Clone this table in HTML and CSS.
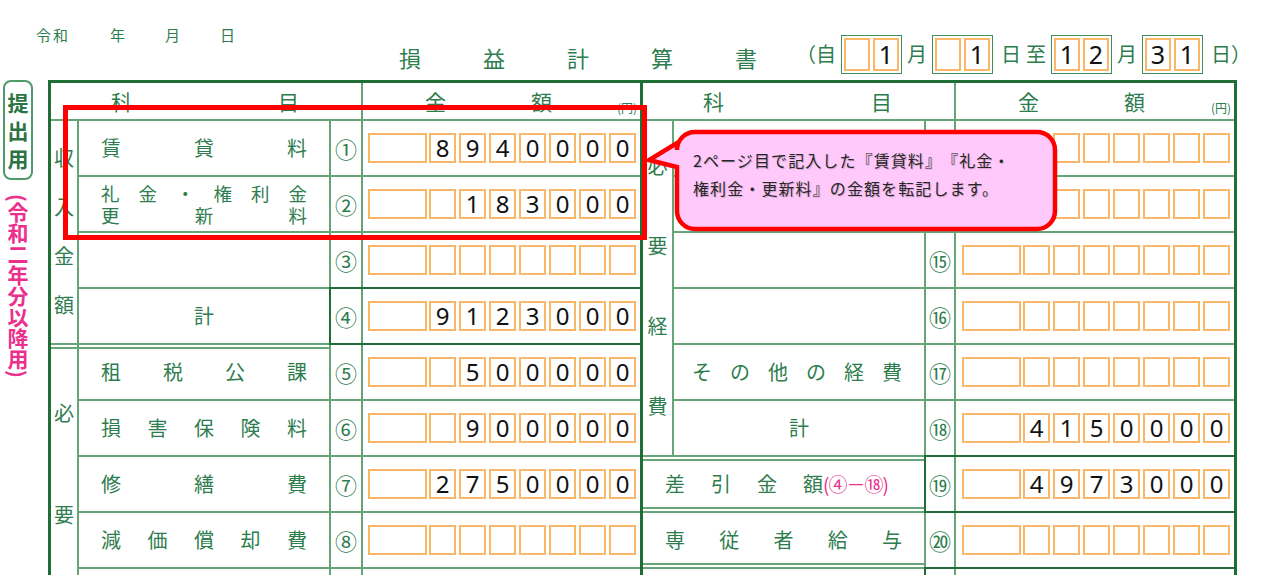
FILE: index.html
```html
<!DOCTYPE html>
<html lang="ja">
<head>
<meta charset="utf-8">
<title>損益計算書</title>
<link rel="stylesheet" href="styles.css">
</head>
<body>
<div class="page">
  <header class="top">
    <div class="era"><span class="reiwa">令和</span><span>年</span><span>月</span><span>日</span></div>
    <div class="title">
      <h1 class="title-text"><span>損</span><span>益</span><span>計</span><span>算</span><span>書</span></h1>
      <div class="period">
        <span class="pc">（自</span>
        <span class="pair"><i class="d dd"></i><i class="d dd">1</i></span>
        <span class="pc">月</span>
        <span class="pair"><i class="d dd"></i><i class="d dd">1</i></span>
        <span class="pc sp">日</span>
        <span class="pc">至</span>
        <span class="pair"><i class="d dd">1</i><i class="d dd">2</i></span>
        <span class="pc">月</span>
        <span class="pair"><i class="d dd">3</i><i class="d dd">1</i></span>
        <span class="pc sp">日）</span>
      </div>
    </div>
  </header>

  <div class="main">
    <aside class="side">
      <div class="tab"><span>提</span><span>出</span><span>用</span></div>
      <div class="note">(令和二年分以降用)</div>
    </aside>

    <div class="sheet">
      <!-- LEFT HALF -->
      <div class="half left">
        <div class="cell hd hd-name"><span>科</span><span>目</span></div>
        <div class="cell hd hd-amt"><span class="k1">金</span><span class="k2">額</span><small>(円)</small></div>

        <div class="cell vlabel v-income"><span>収</span><span>入</span><span>金</span><span>額</span></div>
        <div class="cell name"><span>賃</span><span>貸</span><span>料</span></div>
        <div class="cell num">①</div>
        <div class="cell amt"><i class="d w"></i><i class="d">8</i><i class="d">9</i><i class="d">4</i><i class="d">0</i><i class="d">0</i><i class="d">0</i><i class="d">0</i></div>

        <div class="cell name two"><div class="line"><span>礼</span><span>金</span><span>・</span><span>権</span><span>利</span><span>金</span></div><div class="line"><span>更</span><span>新</span><span>料</span></div></div>
        <div class="cell num">②</div>
        <div class="cell amt"><i class="d w"></i><i class="d"></i><i class="d">1</i><i class="d">8</i><i class="d">3</i><i class="d">0</i><i class="d">0</i><i class="d">0</i></div>

        <div class="cell name"></div>
        <div class="cell num">③</div>
        <div class="cell amt"><i class="d w"></i><i class="d"></i><i class="d"></i><i class="d"></i><i class="d"></i><i class="d"></i><i class="d"></i><i class="d"></i></div>

        <div class="cell name center"><span>計</span></div>
        <div class="total total-l">
          <div class="cell num">④</div>
          <div class="cell amt"><i class="d w"></i><i class="d">9</i><i class="d">1</i><i class="d">2</i><i class="d">3</i><i class="d">0</i><i class="d">0</i><i class="d">0</i></div>
        </div>

        <div class="cell vlabel v-exp dbl-top"><span>必</span><span>要</span></div>
        <div class="cell name dbl-top"><span>租</span><span>税</span><span>公</span><span>課</span></div>
        <div class="cell num">⑤</div>
        <div class="cell amt"><i class="d w"></i><i class="d"></i><i class="d">5</i><i class="d">0</i><i class="d">0</i><i class="d">0</i><i class="d">0</i><i class="d">0</i></div>

        <div class="cell name"><span>損</span><span>害</span><span>保</span><span>険</span><span>料</span></div>
        <div class="cell num">⑥</div>
        <div class="cell amt"><i class="d w"></i><i class="d"></i><i class="d">9</i><i class="d">0</i><i class="d">0</i><i class="d">0</i><i class="d">0</i><i class="d">0</i></div>

        <div class="cell name"><span>修</span><span>繕</span><span>費</span></div>
        <div class="cell num">⑦</div>
        <div class="cell amt"><i class="d w"></i><i class="d">2</i><i class="d">7</i><i class="d">5</i><i class="d">0</i><i class="d">0</i><i class="d">0</i><i class="d">0</i></div>

        <div class="cell name"><span>減</span><span>価</span><span>償</span><span>却</span><span>費</span></div>
        <div class="cell num">⑧</div>
        <div class="cell amt"><i class="d w"></i><i class="d"></i><i class="d"></i><i class="d"></i><i class="d"></i><i class="d"></i><i class="d"></i><i class="d"></i></div>

        <div class="cell name"></div>
        <div class="cell num"></div>
        <div class="cell amt"></div>
      </div>

      <!-- RIGHT HALF -->
      <div class="half right">
        <div class="cell hd hd-name"><span>科</span><span>目</span></div>
        <div class="cell hd hd-amt"><span class="k1">金</span><span class="k2">額</span><small>(円)</small></div>

        <div class="cell vlabel v-exp-r"><span>必</span><span>要</span><span>経</span><span>費</span></div>
        <div class="cell name"></div>
        <div class="cell num"></div>
        <div class="cell amt"><i class="d w"></i><i class="d"></i><i class="d"></i><i class="d"></i><i class="d"></i><i class="d"></i><i class="d"></i><i class="d"></i></div>

        <div class="cell name"></div>
        <div class="cell num"></div>
        <div class="cell amt"><i class="d w"></i><i class="d"></i><i class="d"></i><i class="d"></i><i class="d"></i><i class="d"></i><i class="d"></i><i class="d"></i></div>

        <div class="cell name"></div>
        <div class="cell num">⑮</div>
        <div class="cell amt"><i class="d w"></i><i class="d"></i><i class="d"></i><i class="d"></i><i class="d"></i><i class="d"></i><i class="d"></i><i class="d"></i></div>

        <div class="cell name"></div>
        <div class="cell num">⑯</div>
        <div class="cell amt"><i class="d w"></i><i class="d"></i><i class="d"></i><i class="d"></i><i class="d"></i><i class="d"></i><i class="d"></i><i class="d"></i></div>

        <div class="cell name other"><span>そ</span><span>の</span><span>他</span><span>の</span><span>経</span><span>費</span></div>
        <div class="cell num">⑰</div>
        <div class="cell amt"><i class="d w"></i><i class="d"></i><i class="d"></i><i class="d"></i><i class="d"></i><i class="d"></i><i class="d"></i><i class="d"></i></div>

        <div class="cell name center"><span>計</span></div>
        <div class="cell num">⑱</div>
        <div class="cell amt"><i class="d w"></i><i class="d">4</i><i class="d">1</i><i class="d">5</i><i class="d">0</i><i class="d">0</i><i class="d">0</i><i class="d">0</i></div>

        <div class="cell name wide sub dbl-top dbl-bot"><span>差</span><span>引</span><span>金</span><span>額</span><em>(④－⑱)</em></div>
        <div class="total total-r">
          <div class="cell num">⑲</div>
          <div class="cell amt"><i class="d w"></i><i class="d">4</i><i class="d">9</i><i class="d">7</i><i class="d">3</i><i class="d">0</i><i class="d">0</i><i class="d">0</i></div>
        </div>

        <div class="cell name wide emp dbl-bot"><span>専</span><span>従</span><span>者</span><span>給</span><span>与</span></div>
        <div class="cell num">⑳</div>
        <div class="cell amt"><i class="d w"></i><i class="d"></i><i class="d"></i><i class="d"></i><i class="d"></i><i class="d"></i><i class="d"></i><i class="d"></i></div>

        <div class="cell name wide"></div>
        <div class="total total-r">
          <div class="cell num"></div>
          <div class="cell amt"></div>
        </div>
      </div>
    </div>
  </div>

  <div class="highlight"></div>
  <div class="callout">
    <svg class="bubble" width="425" height="112" viewBox="0 0 425 112" aria-hidden="true">
      <path d="M55 7 H397 A18 18 0 0 1 415 25 V86 A18 18 0 0 1 397 104 H55 A18 18 0 0 1 37 86 V42 L9 35 L37 18 V25 A18 18 0 0 1 55 7 Z" fill="#ffc9fb" stroke="#ff0000" stroke-width="4.5" stroke-linejoin="miter"/>
    </svg>
    <p class="callout-text">2ページ目で記入した『賃貸料』『礼金・<br>権利金・更新料』の金額を転記します。</p>
  </div>
</div>
</body>
</html>
```

FILE: styles.css
```css
* { box-sizing: border-box; margin: 0; padding: 0; }
html, body { width: 1280px; height: 575px; overflow: hidden; background: #fff; }
body {
  font-family: "Noto Sans CJK JP", "Noto Sans", sans-serif;
  color: #2e7d4e;
  text-spacing-trim: space-all;
}
i { font-style: normal; }

.page { position: relative; width: 1280px; height: 575px; overflow: hidden; }

/* ---------- top header ---------- */
.top {
  display: flex;
  justify-content: space-between;
  height: 80px;
  padding: 0 29px 0 36px;
}
.era {
  display: flex;
  gap: 40px;
  padding-top: 25px;
  font-size: 15px;
  line-height: 20px;
}
.era .reiwa { letter-spacing: 2px; }

.title {
  display: flex;
  align-items: center;
  height: 40px;
  margin-top: 34px;
}
.title-text {
  display: flex;
  gap: 62px;
  margin-right: 39px;
  padding-top: 5px;
  font-size: 22px;
  font-weight: 400;
  line-height: 26px;
}
.period {
  display: flex;
  align-items: center;
  gap: 5px;
  font-size: 20px;
  line-height: 24px;
}
.period .sp { margin-left: 3px; }
.pair {
  display: flex;
  gap: 3px;
  padding: 2px;
  border: 1.5px solid #3f8f5a;
}

/* ---------- digit boxes ---------- */
.d {
  display: flex;
  align-items: center;
  justify-content: center;
  width: 27px;
  height: 30px;
  border: 2px solid #f9b768;
  color: #111;
  font-family: "Noto Sans", "DejaVu Sans", sans-serif;
  font-size: 24px;
  line-height: 26px;
}
.d.w { width: 59px; margin-right: -1px; }
.d.dd { width: 26px; height: 33px; font-size: 25px; }

/* ---------- main area ---------- */
.main { display: flex; padding-left: 3px; }
.side {
  display: flex;
  flex-direction: column;
  align-items: center;
  width: 30px;
  margin-right: 15px;
}
.tab {
  display: flex;
  flex-direction: column;
  align-items: center;
  justify-content: center;
  width: 30px;
  height: 100px;
  border: 2px solid #4f9a6a;
  border-radius: 8px;
  color: #2a7443;
  font-size: 21px;
  font-weight: 700;
  line-height: 28px;
}
.note {
  margin-top: 14px;
  writing-mode: vertical-rl;
  color: #ec2f8c;
  font-size: 21px;
  font-weight: 700;
  line-height: 24px;
}

/* ---------- sheet ---------- */
.sheet {
  display: flex;
  gap: 3px;
  padding: 3px;
  background: #1e6e36;
  width: 1189px;
  height: 640px;
  align-items: flex-start;
}
.half {
  display: grid;
  gap: 2px;
  background: #65a578;
  grid-template-rows: 36px repeat(9, 54px);
}
.left  { grid-template-columns: 26px 250px 30px 277px; }
.right { grid-template-columns: 29px 250px 28px 278px; }

.cell { background: #fff; }

.hd { display: flex; align-items: center; font-size: 21px; line-height: 24px; }
.hd-name { grid-column: span 3; justify-content: space-between; padding: 0 62px 0 60px; }
.hd-amt { align-items: center; }
.hd-amt .k1 { margin-left: 62px; }
.hd-amt .k2 { margin-left: 85px; }
.hd-amt small {
  margin-left: auto;
  align-self: flex-end;
  padding: 0 3px 4px 0;
  font-size: 12px;
  line-height: 14px;
}

.vlabel {
  display: flex;
  flex-direction: column;
  align-items: center;
  overflow: hidden;
  font-size: 20px;
  line-height: 20px;
}
.v-income { grid-row: span 4; padding-top: 27px; gap: 29px; }
.v-exp    { grid-row: span 5; padding-top: 58px; gap: 82px; }
.v-exp-r  { grid-row: span 6; padding-top: 35px; gap: 60px; }

.name {
  display: flex;
  align-items: center;
  justify-content: space-between;
  padding: 0 22px 0 22px;
  font-size: 20px;
  line-height: 24px;
}
.name.center { justify-content: center; }
.name.two {
  flex-direction: column;
  align-items: stretch;
  justify-content: center;
  font-size: 18.5px;
  line-height: 22px;
}
.name .line { display: flex; justify-content: space-between; height: 22px; }
.name.other { padding: 0 22px 0 18px; }
.name.wide { grid-column: span 2; }
.name.sub { justify-content: flex-start; padding-left: 22px; }
.name.sub span { margin-right: 26px; }
.name.sub span:nth-child(4) { margin-right: 0; }
.name.sub em {
  font-style: normal;
  color: #ec2f8c;
  font-size: 19px;
  letter-spacing: -1px;
}
.name.emp { padding: 0 22px 0 22px; }

.dbl-top { box-shadow: inset 0 2px 0 #fff, inset 0 4px 0 #65a578; }
.dbl-bot { box-shadow: inset 0 -2px 0 #fff, inset 0 -4px 0 #65a578; }
.dbl-top.dbl-bot {
  box-shadow: inset 0 2px 0 #fff, inset 0 4px 0 #65a578,
              inset 0 -2px 0 #fff, inset 0 -4px 0 #65a578;
}

.num {
  display: flex;
  align-items: center;
  justify-content: center;
  font-size: 22px;
  line-height: 24px;
}

.amt {
  display: flex;
  align-items: center;
  gap: 3px;
  padding-left: 5px;
}
.right .amt { padding-left: 6px; }

.total {
  grid-column: span 2;
  display: grid;
  gap: 2px;
  background: #65a578;
  box-shadow: 0 0 0 2px #1e6e36;
}
.total-l { grid-template-columns: 30px 277px; }
.total-r { grid-template-columns: 28px 278px; }

/* ---------- overlays ---------- */
.highlight {
  position: absolute;
  left: 63px;
  top: 105px;
  width: 584px;
  height: 135px;
  border: 5px solid #ff0000;
}
.callout {
  position: absolute;
  left: 640px;
  top: 125px;
  width: 425px;
  height: 112px;
}
.bubble { display: block; }
.callout-text {
  position: absolute;
  left: 53px;
  top: 21px;
  color: #262626;
  font-size: 16px;
  line-height: 28px;
  letter-spacing: 1.1px;
  text-spacing-trim: space-all;
  text-shadow: 1px 1px 1px rgba(0,0,0,0.18);
  white-space: nowrap;
}
```
